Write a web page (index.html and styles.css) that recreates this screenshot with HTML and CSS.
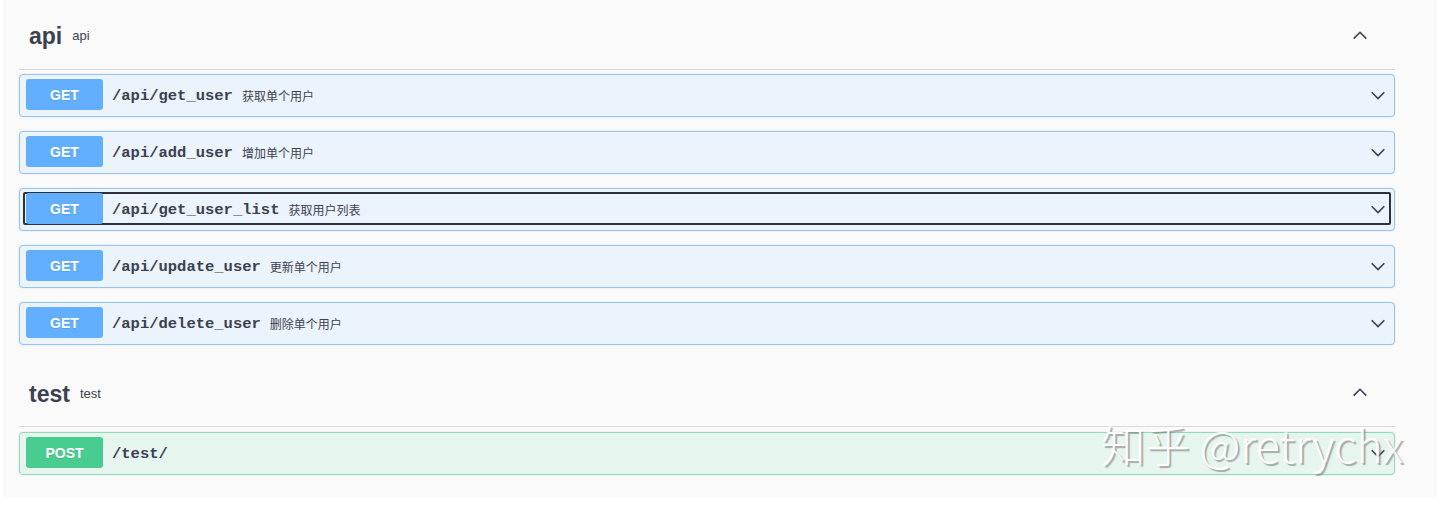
FILE: index.html
```html
<!DOCTYPE html>
<html lang="zh-CN">
<head>
<meta charset="utf-8">
<title>API</title>
<link rel="stylesheet" href="styles.css">
</head>
<body>
<div class="page">
  <section class="tag-section">
    <div class="tag">
      <h3 class="tag-name">api</h3><small class="tag-desc">api</small>
      <svg class="arrow-up" viewBox="0 0 20 20" width="18" height="18"><path d="M3 14 L10 7 L17 14" fill="none" stroke="#3b4151" stroke-width="1.8"/></svg>
    </div>
    <div class="op get"><div class="summary"><span class="method">GET</span><span class="path">/api/get_user</span><span class="desc">获取单个用户</span><svg class="arrow-down" viewBox="0 0 20 20" width="18" height="18"><path d="M3 7 L10 14 L17 7" fill="none" stroke="#3b4151" stroke-width="1.8"/></svg></div></div>
    <div class="op get"><div class="summary"><span class="method">GET</span><span class="path">/api/add_user</span><span class="desc">增加单个用户</span><svg class="arrow-down" viewBox="0 0 20 20" width="18" height="18"><path d="M3 7 L10 14 L17 7" fill="none" stroke="#3b4151" stroke-width="1.8"/></svg></div></div>
    <div class="op get"><div class="summary focused"><span class="method">GET</span><span class="path">/api/get_user_list</span><span class="desc">获取用户列表</span><svg class="arrow-down" viewBox="0 0 20 20" width="18" height="18"><path d="M3 7 L10 14 L17 7" fill="none" stroke="#3b4151" stroke-width="1.8"/></svg></div></div>
    <div class="op get"><div class="summary"><span class="method">GET</span><span class="path">/api/update_user</span><span class="desc">更新单个用户</span><svg class="arrow-down" viewBox="0 0 20 20" width="18" height="18"><path d="M3 7 L10 14 L17 7" fill="none" stroke="#3b4151" stroke-width="1.8"/></svg></div></div>
    <div class="op get"><div class="summary"><span class="method">GET</span><span class="path">/api/delete_user</span><span class="desc">删除单个用户</span><svg class="arrow-down" viewBox="0 0 20 20" width="18" height="18"><path d="M3 7 L10 14 L17 7" fill="none" stroke="#3b4151" stroke-width="1.8"/></svg></div></div>
  </section>
  <section class="tag-section second">
    <div class="tag">
      <h3 class="tag-name">test</h3><small class="tag-desc">test</small>
      <svg class="arrow-up" viewBox="0 0 20 20" width="18" height="18"><path d="M3 14 L10 7 L17 14" fill="none" stroke="#3b4151" stroke-width="1.8"/></svg>
    </div>
    <div class="op post"><div class="summary"><span class="method">POST</span><span class="path">/test/</span><svg class="arrow-down" viewBox="0 0 20 20" width="18" height="18"><path d="M3 7 L10 14 L17 7" fill="none" stroke="#3b4151" stroke-width="1.8"/></svg></div></div>
  </section>
  <div class="watermark">知乎 @retrychx</div>
</div>
</body>
</html>
```
FILE: styles.css
```css
* { box-sizing: border-box; }
html, body { margin: 0; padding: 0; background: #ffffff; }
body { font-family: "Liberation Sans", Arial, sans-serif; color: #3b4151; }

.page {
  position: relative;
  margin-left: 3px;
  width: 1434px;
  height: 497px;
  background: #fafafa;
  padding: 4px 42px 0 16px;
}

.tag {
  display: flex;
  align-items: center;
  height: 66px;
  padding: 0 26px 0 10px;
  border-bottom: 1px solid #d9dadd;
  margin-bottom: 4px;
}
.tag-name {
  margin: 0;
  font-size: 23px;
  font-weight: 700;
  line-height: 1;
  position: relative;
  top: 0;
}
.tag-desc {
  margin-left: 10px;
  font-size: 13px;
  line-height: 1;
  position: relative;
  top: -1px;
}
.arrow-up { margin-left: auto; position: relative; top: -2px; }

.second { padding-top: 2px; }
.second .tag { margin-bottom: 5px; }
.second .tag-name { top: 1px; }
.second .tag-desc { top: 0; }

.op {
  height: 43px;
  border: 1px solid #93c4f4;
  border-radius: 4px;
  margin-bottom: 14px;
  padding: 4px;
  background: #ebf3fc;
  box-shadow: 0 0 2px rgba(0,0,0,.12);
}
.op.post { background: #e7f5ef; border-color: #8fdab7; }

.summary {
  display: flex;
  align-items: center;
  height: 100%;
  padding: 0 2px 0 1px;
  border: 2px solid transparent;
  border-radius: 2px;
  margin: -1px;
}
.summary.focused { border-color: #2d3139; }

.method {
  width: 77px;
  height: 31px;
  border-radius: 3px;
  background: #61affe;
  color: #fff;
  font-size: 14px;
  font-weight: 700;
  display: flex;
  align-items: center;
  justify-content: center;
  text-shadow: 0 1px 0 rgba(0,0,0,.1);
}
.post .method { background: #49cc90; }

.path {
  margin-left: 9px;
  font-family: "Liberation Mono", "Courier New", monospace;
  font-weight: 700;
  font-size: 15.5px;
  color: #3b4151;
  position: relative;
  top: 1px;
}
.desc {
  margin-left: 9px;
  font-family: "Noto Sans CJK SC", sans-serif;
  font-size: 12px;
  color: #3b4151;
  position: relative;
  top: 1px;
}
.arrow-down { margin-left: auto; }

.watermark {
  position: absolute;
  left: 1098px;
  top: 417px;
  font-family: "Noto Sans CJK SC", "Noto Sans", sans-serif;
  font-size: 44.5px;
  font-weight: 300;
  color: rgba(255,255,255,0.92);
  text-shadow: 2px 2px 1px rgba(110,110,110,0.55);
  white-space: nowrap;
  line-height: 1.2;
}
```
